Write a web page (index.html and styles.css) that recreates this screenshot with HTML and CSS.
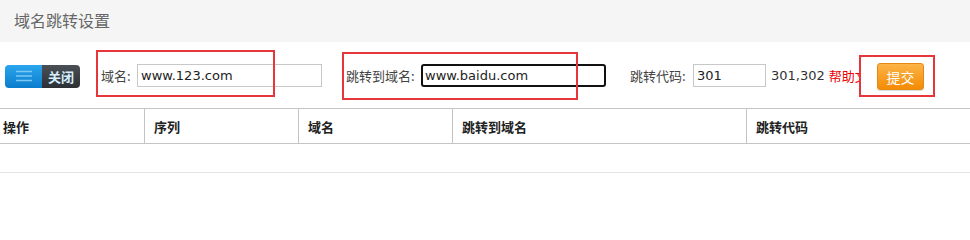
FILE: index.html
```html
<!DOCTYPE html>
<html lang="zh-CN">
<head>
<meta charset="utf-8">
<title>域名跳转设置</title>
<link rel="stylesheet" href="styles.css">
</head>
<body>
<div class="page">
  <div class="head">域名跳转设置</div>
  <div class="toolbar">
    <div class="toggle">
      <span class="toggle-on">
        <svg width="18" height="12" viewBox="0 0 18 12"><path d="M1 1.5H17M1 6H17M1 10.5H17" stroke="#7cc8f4" stroke-width="1.4" fill="none"/></svg>
      </span>
      <span class="toggle-off">关闭</span>
    </div>
    <label class="field f1"><span class="lbl">域名:</span><input class="inp inp-wide" type="text" value="www.123.com"></label>
    <label class="field f2"><span class="lbl">跳转到域名:</span><input class="inp inp-wide inp-focus" type="text" value="www.baidu.com"></label>
    <label class="field f3"><span class="lbl">跳转代码:</span><input class="inp inp-code" type="text" value="301"></label>
    <span class="hint">301,302</span>
    <a class="help">帮助文档</a>
    <span class="mark m1"></span>
    <span class="mark m2"></span>
    <span class="mark m3"></span>
    <button class="submit" type="button">提交</button>
  </div>
  <table class="grid">
    <thead>
      <tr><th class="c1">操作</th><th class="c2">序列</th><th class="c3">域名</th><th class="c4">跳转到域名</th><th>跳转代码</th></tr>
    </thead>
    <tbody>
      <tr><td></td><td></td><td></td><td></td><td></td></tr>
    </tbody>
  </table>
</div>
</body>
</html>
```

FILE: styles.css
```css
html, body {
  margin: 0;
  padding: 0;
  background: #fff;
}
body {
  font-family: "Noto Sans CJK SC", "DejaVu Sans", sans-serif;
  font-size: 13px;
  color: #333;
  overflow: hidden;
}
.page {
  width: 970px;
}
.head {
  height: 42px;
  background: #f5f5f5;
  color: #666;
  font-size: 16px;
  line-height: 40px;
  padding-left: 14px;
}
.toolbar {
  position: relative;
  height: 66px;
  display: flex;
  align-items: center;
  padding-left: 5px;
  white-space: nowrap;
}
.toggle {
  display: flex;
  width: 75px;
  height: 23px;
  border-radius: 4px;
  overflow: hidden;
  margin-top: 2px;
}
.toggle-on {
  width: 37px;
  background: linear-gradient(#2aa6ee, #0b7ccc);
  display: flex;
  align-items: center;
  justify-content: center;
}
.toggle-off {
  flex: 1;
  background: linear-gradient(#4a5056, #2c3034);
  color: #d6efff;
  font-weight: bold;
  font-size: 13px;
  line-height: 23px;
  text-align: center;
}
.field {
  display: flex;
  align-items: center;
}
.f1 { margin-left: 21px; }
.f2 { margin-left: 24px; }
.f3 { margin-left: 24px; }
.lbl {
  color: #444;
  margin-right: 2px;
}
.f1 .lbl { width: 34px; }
.f2 .lbl { width: 73px; }
.f3 .lbl { width: 61px; }
.inp {
  box-sizing: border-box;
  height: 23px;
  border: 1px solid #c8c8c8;
  padding: 0 3px;
  font-family: "DejaVu Sans", sans-serif;
  font-size: 13px;
  color: #222;
  background: #fff;
  outline: none;
  margin: 0;
}
.inp-wide { width: 185px; }
.inp-code { width: 73px; }
.inp-focus {
  border: 2px solid #111;
  border-radius: 3px;
  padding: 0 2px;
}
.hint {
  margin-left: 5px;
  font-family: "DejaVu Sans", sans-serif;
  color: #333;
}
.help {
  margin-left: 4px;
  color: #e00;
}
.submit {
  position: absolute;
  left: 877px;
  top: 21px;
  width: 47px;
  height: 27px;
  border: 1px solid #e48a12;
  border-radius: 3px;
  background: linear-gradient(#fcb447, #f48b05);
  color: #fff;
  font-family: "Noto Sans CJK SC", sans-serif;
  font-size: 14px;
  padding: 0;
  box-shadow: 0 1px 1px rgba(0,0,0,0.15);
}
.mark {
  position: absolute;
  border: 2px solid #e6353b;
  box-sizing: border-box;
}
.m1 { left: 96px; top: 8px; width: 179px; height: 47px; }
.m2 { left: 342px; top: 10px; width: 236px; height: 48px; }
.m3 { left: 859px; top: 13px; width: 76px; height: 42px; background: #fff; }
.grid {
  border-collapse: collapse;
  margin-left: -6px;
  width: 976px;
  table-layout: fixed;
}
.grid th {
  height: 34px;
  text-align: left;
  font-weight: bold;
  color: #222;
  padding: 0 0 0 9px;
  border-top: 1px solid #c4c4c4;
  border-bottom: 1px solid #c4c4c4;
  border-left: 1px solid #c4c4c4;
}
.grid th:first-child { border-left: none; }
.grid .c1 { width: 141px; }
.grid .c2 { width: 144px; }
.grid .c3 { width: 144px; }
.grid .c4 { width: 284px; }
.grid td {
  height: 28px;
  border-bottom: 1px solid #e3e3e3;
  padding: 0;
}
```
